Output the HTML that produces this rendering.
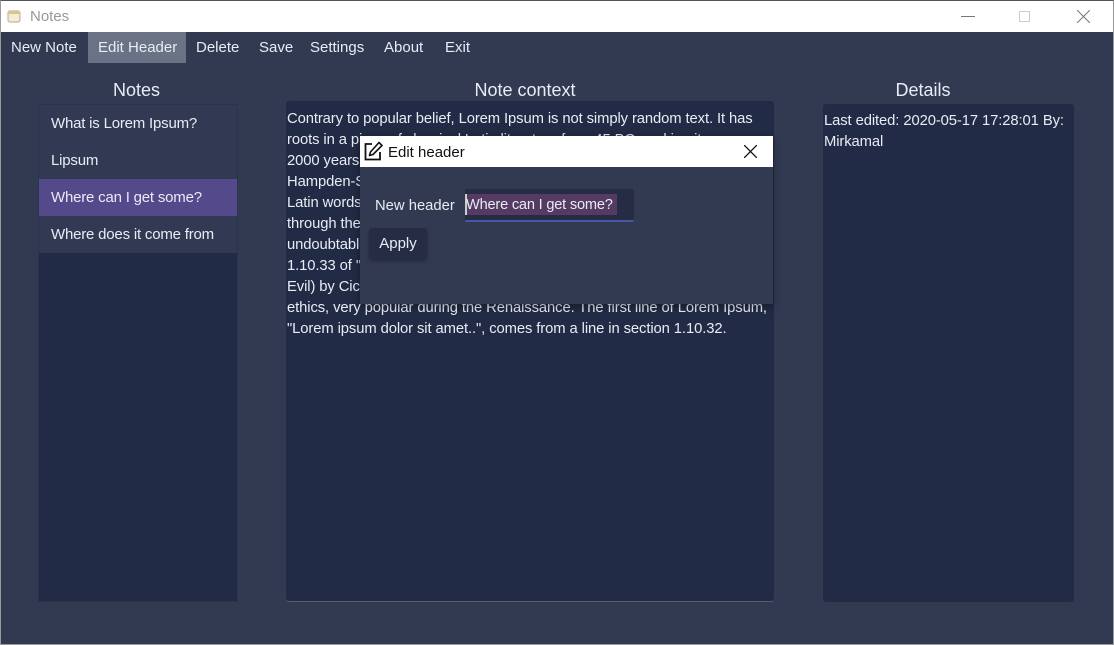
<!DOCTYPE html>
<html><head><meta charset="utf-8"><style>
*{margin:0;padding:0;box-sizing:border-box}
body{width:1114px;height:645px;overflow:hidden;background:#323a52;font-family:"Liberation Sans",sans-serif;color:#e8ecf4;position:relative}
.abs{position:absolute;white-space:nowrap}
#title{left:0;top:0;width:1114px;height:32px;background:#fff;border:1px solid #555;border-bottom:none}
.menu{top:32px;height:31px;line-height:31px;font-size:15px;padding:0 10px}
.h{font-size:18px;top:80px;text-align:center}
.panel{background:#222b45}
.li{left:39px;width:198px;height:37px;line-height:37px;padding-left:12px;font-size:15px;background:#313a52;letter-spacing:-0.2px}
.tx{font-size:14.8px;left:287px;line-height:21px;letter-spacing:-0.1px}
</style></head><body>
<div class="abs" id="title">
  <svg class="abs" style="left:6px;top:8px" width="14" height="14"><rect x="1" y="2" width="12" height="11" rx="2" fill="#f3ecd6" stroke="#b9a98a"/><rect x="1" y="2" width="12" height="3" fill="#d9c48a"/></svg>
  <div class="abs" style="left:29px;top:7px;font-size:15px;color:#9a9a9a">Notes</div>
  <div class="abs" style="left:960px;top:15px;width:14px;height:1px;background:#777"></div>
  <div class="abs" style="left:1018px;top:10px;width:11px;height:11px;border:1px solid #ccc"></div>
  <svg class="abs" style="left:1076px;top:9px" width="13" height="13"><path d="M0 0L13 13M13 0L0 13" stroke="#777" stroke-width="1"/></svg>
</div>
<div class="abs menu" style="left:1px">New Note</div>
<div class="abs menu" style="left:88px;background:#6a7285;height:31px;width:98px">Edit Header</div>
<div class="abs menu" style="left:186px">Delete</div>
<div class="abs menu" style="left:249px">Save</div>
<div class="abs menu" style="left:300px">Settings</div>
<div class="abs menu" style="left:374px">About</div>
<div class="abs menu" style="left:435px">Exit</div>

<div class="abs h" style="left:37px;width:199px">Notes</div>
<div class="abs h" style="left:286px;width:478px">Note context</div>
<div class="abs h" style="left:823px;width:200px">Details</div>

<div class="abs panel" style="left:38px;top:104px;width:200px;height:498px;border:1px solid #2a3350"></div>
<div class="abs li" style="top:105px">What is Lorem Ipsum?</div>
<div class="abs li" style="top:142px">Lipsum</div>
<div class="abs li" style="top:179px;background:#544a8b">Where can I get some?</div>
<div class="abs li" style="top:216px">Where does it come from</div>

<div class="abs panel" style="left:286px;top:101px;width:488px;height:501px;border-radius:3px;border-bottom:1px solid #5a5f70"></div>
<div class="abs tx" style="top:109px">Contrary to popular belief, Lorem Ipsum is not simply random text. It has<br>roots in a piece of classical Latin literature from 45 BC, making it over<br>2000 years old. Richard McClintock, a Latin professor at<br>Hampden-Sydney College in Virginia, looked up one of the more obscure<br>Latin words, consectetur, from a Lorem Ipsum passage, and going<br>through the cites of the word in classical literature, discovered the<br>undoubtable source. Lorem Ipsum comes from sections 1.10.32 and<br>1.10.33 of "de Finibus Bonorum et Malorum" (The Extremes of Good and<br>Evil) by Cicero, written in 45 BC. This book is a treatise on the theory of<br>ethics, very popular during the Renaissance. The first line of Lorem Ipsum,<br>"Lorem ipsum dolor sit amet..", comes from a line in section 1.10.32.</div>

<div class="abs panel" style="left:823px;top:104px;width:251px;height:498px;border-radius:3px"></div>
<div class="abs" style="left:824px;top:111px;font-size:14.8px;line-height:21px;letter-spacing:-0.1px">Last edited: 2020-05-17 17:28:01 By:<br>Mirkamal</div>

<div class="abs" style="left:360px;top:136px;width:413px;height:168px;background:#323a52;box-shadow:0 2px 8px rgba(0,0,0,.4)">
  <div class="abs" style="left:0;top:0;width:413px;height:31px;background:#fff"></div>
  <svg class="abs" style="left:3px;top:5px" width="20" height="20"><path d="M9 3H2.5V18.5H17V11" fill="none" stroke="#111" stroke-width="1.8"/><path d="M16 1.5L19 4.5L10 13.5L6.5 14.5L7.5 11Z" fill="none" stroke="#111" stroke-width="1.6" stroke-linejoin="round"/></svg>
  <div class="abs" style="left:28px;top:8px;font-size:15px;color:#111">Edit header</div>
  <svg class="abs" style="left:384px;top:9px" width="13" height="13"><path d="M0 0L13 13M13 0L0 13" stroke="#111" stroke-width="1.3"/></svg>
  <div class="abs" style="left:15px;top:62px;font-size:14.8px">New header</div>
  <div class="abs" style="left:105px;top:53px;width:169px;height:33px;background:#252c43;border-bottom:2px solid #4656a8;border-radius:2px"></div>
  <div class="abs" style="left:105px;top:58px;width:152px;height:21px;background:#553a63;border-left:2px solid #ccc"></div>
  <div class="abs" style="left:106px;top:61px;font-size:14.6px;letter-spacing:-0.2px">Where can I get some?</div>
  <div class="abs" style="left:9px;top:92px;width:58px;height:31px;background:#252c43;border-radius:3px;box-shadow:0 2px 4px rgba(0,0,0,.3);font-size:15px;line-height:31px;text-align:center">Apply</div>
</div>
<div class="abs" style="left:0;top:0;width:1114px;height:645px;border:1px solid #9a9a9a;border-top-color:#555;pointer-events:none"></div>
</body></html>
